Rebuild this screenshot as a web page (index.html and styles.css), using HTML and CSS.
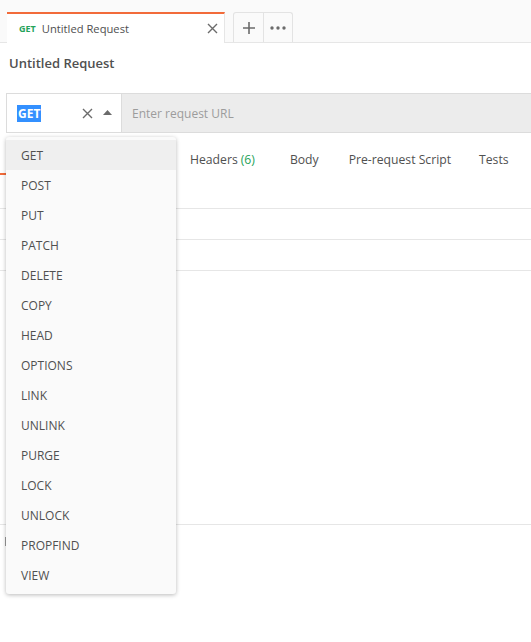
FILE: index.html
```html
<!DOCTYPE html>
<html>
<head>
<meta charset="utf-8">
<link rel="stylesheet" href="styles.css">
</head>
<body>
<div class="app">
  <div class="tabbar">
    <div class="tab">
      <span class="tab-method">GET</span>
      <span class="tab-name">Untitled Request</span>
      <svg class="tab-close" width="11" height="11" viewBox="0 0 11 11"><path d="M1 1L10 10M10 1L1 10" stroke="#6b6b6b" stroke-width="1.4"/></svg>
    </div>
    <div class="tab-actions">
      <div class="tab-btn"><svg width="12" height="12" viewBox="0 0 12 12"><path d="M6 0V12M0 6H12" stroke="#6b6b6b" stroke-width="1.6"/></svg></div>
      <div class="tab-btn"><svg width="16" height="4" viewBox="0 0 16 4"><circle cx="2" cy="2" r="1.7" fill="#6b6b6b"/><circle cx="8" cy="2" r="1.7" fill="#6b6b6b"/><circle cx="14" cy="2" r="1.7" fill="#6b6b6b"/></svg></div>
    </div>
  </div>

  <div class="request-title">Untitled Request</div>

  <div class="urlbar">
    <div class="method-select">
      <span class="method-value">GET</span>
      <svg class="method-clear" width="11" height="11" viewBox="0 0 11 11"><path d="M1 1L10 10M10 1L1 10" stroke="#6b6b6b" stroke-width="1.4"/></svg>
      <svg class="method-caret" width="9" height="5" viewBox="0 0 9 5"><path d="M0 5L4.5 0L9 5Z" fill="#6b6b6b"/></svg>
    </div>
    <div class="url-input">Enter request URL</div>
  </div>

  <div class="req-tabs">
    <div class="req-tab-hidden active"></div>
    <div class="req-tab tab-headers">Headers <span class="count">(6)</span></div>
    <div class="req-tab">Body</div>
    <div class="req-tab tab-pre">Pre-request Script</div>
    <div class="req-tab">Tests</div>
  </div>

  <div class="table">
    <div class="trow"></div>
    <div class="trow"></div>
    <div class="trow"></div>
  </div>

  <div class="response">
    <span class="response-mark"></span>
  </div>

  <div class="dropdown">
    <div class="dd-item selected">GET</div>
    <div class="dd-item">POST</div>
    <div class="dd-item">PUT</div>
    <div class="dd-item">PATCH</div>
    <div class="dd-item">DELETE</div>
    <div class="dd-item">COPY</div>
    <div class="dd-item">HEAD</div>
    <div class="dd-item">OPTIONS</div>
    <div class="dd-item">LINK</div>
    <div class="dd-item">UNLINK</div>
    <div class="dd-item">PURGE</div>
    <div class="dd-item">LOCK</div>
    <div class="dd-item">UNLOCK</div>
    <div class="dd-item">PROPFIND</div>
    <div class="dd-item">VIEW</div>
  </div>
</div>
</body>
</html>
```

FILE: styles.css
```css
* { box-sizing: border-box; }
html, body {
  margin: 0;
  padding: 0;
  background: #ffffff;
  font-family: "Open Sans", "Liberation Sans", sans-serif;
  color: #505050;
}
.app {
  position: relative;
  width: 531px;
  height: 642px;
  overflow: hidden;
}
.tabbar {
  height: 43px;
  background: #fafafa;
  border-bottom: 1px solid #e6e6e6;
  display: flex;
  align-items: flex-end;
  padding-left: 7px;
}
.tab {
  width: 218px;
  height: 31px;
  margin-bottom: -1px;
  background: #ffffff;
  border-top: 2px solid #f26b3a;
  border-right: 1px solid #e6e6e6;
  display: flex;
  align-items: center;
  padding: 0 6px 0 12px;
}
.tab-method {
  font-size: 9px;
  font-weight: 700;
  color: #26a35a;
  margin-right: 6px;
}
.tab-name {
  font-size: 11.2px;
  color: #505050;
  flex: 1;
}
.tab-actions {
  display: flex;
  margin-left: 8px;
  height: 30px;
  border: 1px solid #e3e3e3;
  border-bottom: none;
  border-radius: 3px 3px 0 0;
}
.tab-btn {
  width: 29px;
  display: flex;
  align-items: center;
  justify-content: center;
}
.tab-btn + .tab-btn { border-left: 1px solid #e3e3e3; }

.request-title {
  font-size: 13px;
  font-weight: 600;
  color: #505050;
  padding: 11px 9px 0;
  height: 50px;
}
.urlbar {
  margin-left: 6px;
  height: 40px;
  display: flex;
  border: 1px solid #dcdcdc;
  border-right: none;
}
.method-select {
  width: 115px;
  background: #ffffff;
  border-right: 1px solid #dcdcdc;
  display: flex;
  align-items: center;
  padding-left: 10px;
}
.method-value {
  font-size: 12px;
  font-weight: 700;
  color: #ffffff;
  background: #3390ff;
  line-height: 17px;
  padding: 0 1px;
}
.method-clear { margin-left: 41px; }
.method-caret { margin-left: 10px; margin-top: -1px; }
.url-input {
  flex: 1;
  background: #ececec;
  display: flex;
  align-items: center;
  padding-left: 10px;
  font-size: 12px;
  color: #9c9c9c;
}
.req-tabs {
  display: flex;
  height: 42px;
  align-items: stretch;
}
.req-tab-hidden {
  width: 176px;
  border-bottom: 2px solid #f26b3a;
}
.req-tab {
  padding: 12px 15px 0;
  font-size: 12.2px;
  color: #505050;
  display: flex;
  align-items: center;
  border-bottom: 2px solid transparent;
}
.req-tab.tab-headers { padding-left: 14px; padding-right: 20px; }
.req-tab.tab-pre { padding-right: 13px; }
.count { color: #26a35a; margin-left: 3px; }
.trow {
  height: 31px;
  border-bottom: 1px solid #e6e6e6;
}
.trow:first-child { height: 34px; }
.response {
  margin-top: 253px;
  border-top: 1px solid #e6e6e6;
  padding: 12px 5px;
}
.response-mark {
  display: block;
  width: 2px;
  height: 9px;
  background: #9a9a9a;
}
.dropdown {
  position: absolute;
  left: 6px;
  top: 137px;
  width: 170px;
  height: 457px;
  background: #fafafa;
  border-radius: 3px;
  box-shadow: 0 1px 4px rgba(0,0,0,0.28);
  padding-top: 3px;
}
.dd-item {
  height: 30px;
  display: flex;
  align-items: center;
  padding-left: 15px;
  font-size: 12px;
  color: #505050;
}
.dd-item.selected { background: #efefef; }
```
